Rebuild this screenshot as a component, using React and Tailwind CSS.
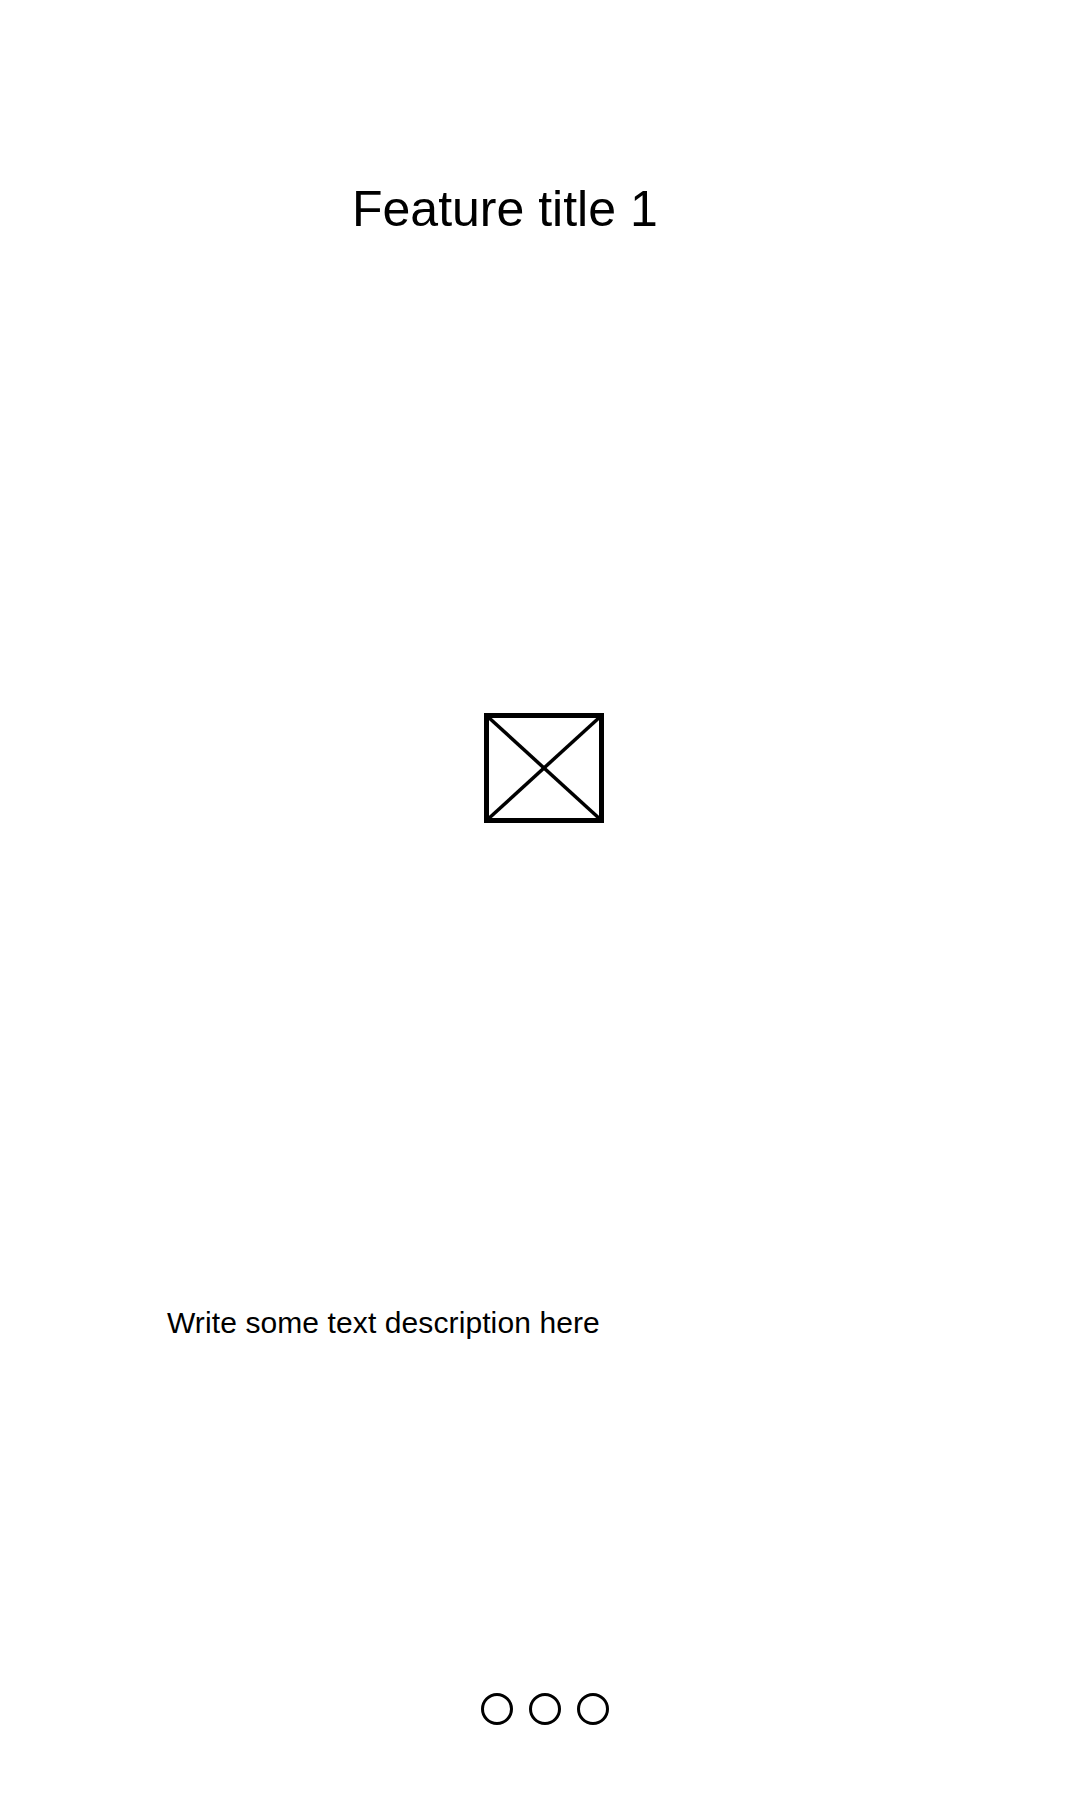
export default function App() {
  return (
    <div
      className="w-full h-[1800px] bg-white text-black flex flex-col"
      style={{ fontFamily: '"Liberation Sans", Arial, sans-serif' }}
    >
      {/* Title */}
      <h1 className="mt-[184px] pl-[352px] text-[50px] leading-none font-normal">
        Feature title 1
      </h1>

      {/* Image placeholder */}
      <div className="mt-[479px] pl-[484px]">
        <svg width="120" height="110" viewBox="0 0 120 110">
          <rect x="2.5" y="2.5" width="115" height="105" fill="none" stroke="#000" strokeWidth="5" />
          <line x1="3" y1="3" x2="117" y2="107" stroke="#000" strokeWidth="3.5" />
          <line x1="117" y1="3" x2="3" y2="107" stroke="#000" strokeWidth="3.5" />
        </svg>
      </div>

      {/* Description */}
      <p className="mt-[485px] pl-[167px] text-[30px] tracking-[0.1px] leading-none">
        Write some text description here
      </p>

      {/* Pager dots */}
      <div className="mt-[355px] pl-[481px] flex gap-[16px]">
        {[0, 1, 2].map((i) => (
          <span
            key={i}
            className="w-[32px] h-[32px] rounded-full border-[3px] border-black"
          />
        ))}
      </div>
    </div>
  );
}
